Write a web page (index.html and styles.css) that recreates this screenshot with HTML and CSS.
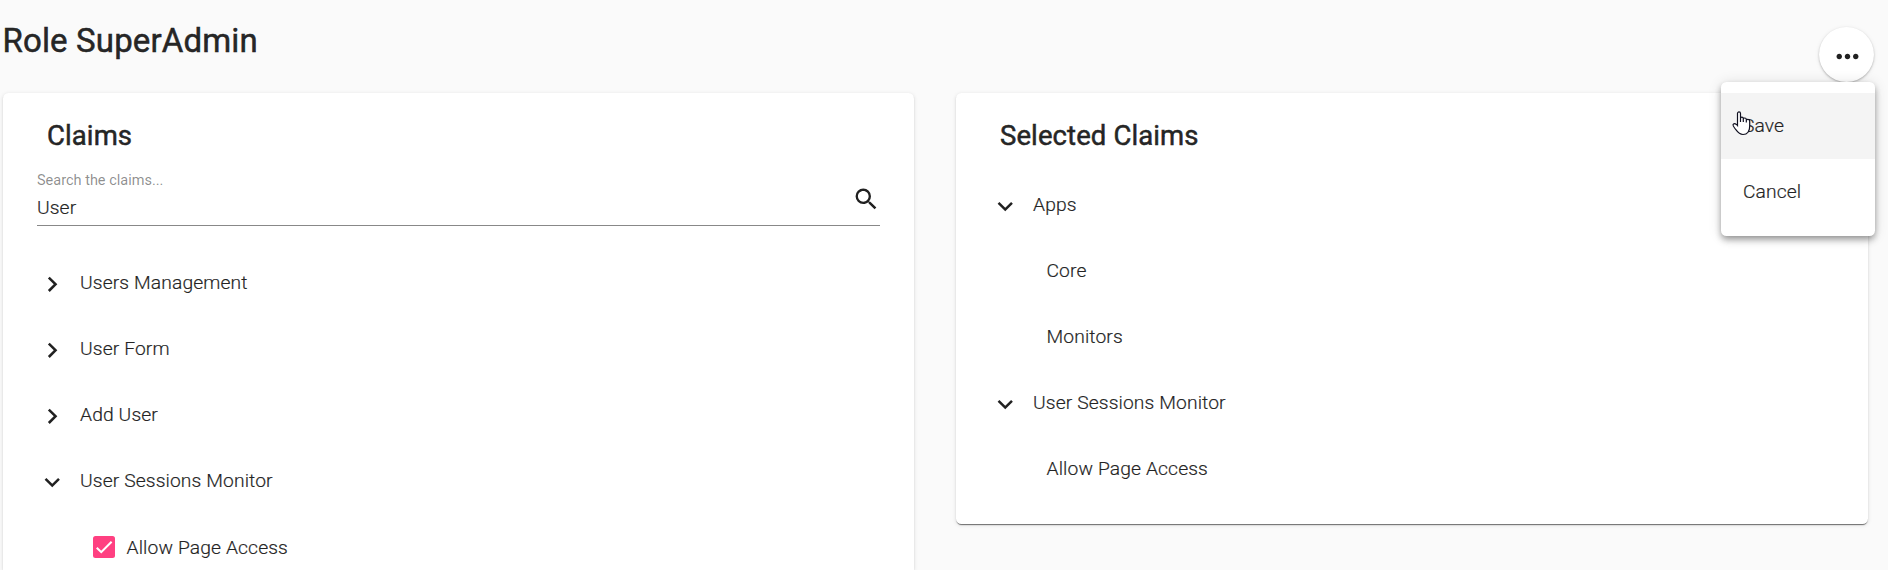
FILE: index.html
```
<!DOCTYPE html>
<html lang="en">
<head>
<meta charset="utf-8">
<title>Role SuperAdmin</title>
<link rel="stylesheet" href="styles.css">
</head>
<body>
<svg class="defs" width="0" height="0" aria-hidden="true">
  <symbol id="chev-right" viewBox="0 0 24 24"><path d="M10 6 8.59 7.41 13.17 12l-4.58 4.59L10 18l6-6z"/></symbol>
  <symbol id="chev-down" viewBox="0 0 24 24"><path d="M7.41 8.59 12 13.17l4.59-4.58L18 10l-6 6-6-6z"/></symbol>
</svg>
<header class="page-header">
  <h1 class="page-title">Role SuperAdmin</h1>
  <div class="actions">
    <button class="fab" aria-label="Actions"><svg class="fab-icon" viewBox="0 0 24 24"><path d="M6 10c-1.1 0-2 .9-2 2s.9 2 2 2 2-.9 2-2-.9-2-2-2zm12 0c-1.1 0-2 .9-2 2s.9 2 2 2 2-.9 2-2-.9-2-2-2zm-6 0c-1.1 0-2 .9-2 2s.9 2 2 2 2-.9 2-2-.9-2-2-2z"/></svg></button>
    <div class="menu" role="menu">
      <div class="menu-item hovered" role="menuitem">Save</div>
      <div class="menu-item" role="menuitem">Cancel</div>
      <svg class="pointer" viewBox="0 0 19 25"><path d="M5.500 14.500V2.600C5.500.4 8.500.4 8.500 2.600V11V7.500C8.500 5.700 11.300 5.700 11.300 7.500V11V8.200C11.300 6.600 14.300 6.600 14.300 8.400V11.500V9.400C14.300 8 17.700 8 17.700 10.200V15C17.700 20 15.500 23.500 11 23.500C6.500 23.500 5 20 2.600 17C1.200 15.200.5 14.200 1.200 13.300C2.500 12 4.300 13 5.500 14.500Z"/></svg>
    </div>
  </div>
</header>
<main class="columns">
  <section class="card claims">
    <h2 class="card-title">Claims</h2>
    <div class="search">
      <div class="search-text">
        <label class="search-label">Search the claims...</label>
        <div class="search-value">User</div>
      </div>
      <svg class="search-icon" viewBox="0 0 24 24"><path d="M15.5 14h-.79l-.28-.27A6.471 6.471 0 0 0 16 9.500 6.500 6.500 0 1 0 9.500 16c1.610 0 3.090-.59 4.230-1.570l.27.28v.79l5 4.990L20.490 19l-4.990-5zm-6 0C7.010 14 5 11.990 5 9.500S7.010 5 9.500 5 14 7.010 14 9.500 11.990 14 9.500 14z"/></svg>
    </div>
    <ul class="tree">
      <li class="node"><svg class="chev"><use href="#chev-right"/></svg>Users Management</li>
      <li class="node"><svg class="chev"><use href="#chev-right"/></svg>User Form</li>
      <li class="node"><svg class="chev"><use href="#chev-right"/></svg>Add User</li>
      <li class="node"><svg class="chev"><use href="#chev-down"/></svg>User Sessions Monitor</li>
      <li class="node check-node"><span class="checkbox"><svg class="check" viewBox="0 0 24 24"><path d="M4.100 12.700 9 17.600 20.300 6.300"/></svg></span>Allow Page Access</li>
    </ul>
  </section>
  <section class="card selected">
    <h2 class="card-title">Selected Claims</h2>
    <ul class="tree">
      <li class="node"><svg class="chev"><use href="#chev-down"/></svg>Apps</li>
      <li class="node leaf">Core</li>
      <li class="node leaf">Monitors</li>
      <li class="node"><svg class="chev"><use href="#chev-down"/></svg>User Sessions Monitor</li>
      <li class="node leaf">Allow Page Access</li>
    </ul>
  </section>
</main>
</body>
</html>
```
FILE: styles.css
```
* { box-sizing: border-box; }
html, body { height: 100%; }
body {
  margin: 0;
  overflow: hidden;
  background: #fafafa;
  color: rgba(0, 0, 0, .87);
  font-family: Roboto, sans-serif;
  font-size: 19.25px;
}
.defs { display: none; }
h1, h2, ul { margin: 0; padding: 0; }
ul { list-style: none; }
svg { fill: currentColor; flex: none; }

.page-header {
  display: flex;
  justify-content: space-between;
  height: 93px;
  padding: 0 14px 0 2.5px;
}
.page-title {
  padding-top: 19px;
  font-size: 33px;
  line-height: 44px;
  font-weight: 400;
  letter-spacing: .14px;
  -webkit-text-stroke: .5px #212121;
}
.actions { position: relative; padding-top: 27px; }
.fab {
  display: flex;
  align-items: center;
  justify-content: center;
  width: 55px;
  height: 55px;
  padding: 3px 0 0 1px;
  border: 0;
  border-radius: 50%;
  background: #fff;
  color: #212121;
  box-shadow: 0 1px 2px rgba(0, 0, 0, .25), 0 1px 5px rgba(0, 0, 0, .08);
}
.fab-icon { width: 33px; height: 33px; }

.menu {
  position: absolute;
  top: 82px;
  right: -1px;
  z-index: 2;
  width: 154px;
  height: 154px;
  padding: 11px 0;
  border-radius: 5.5px;
  background: #fff;
  box-shadow: 0 3px 6px -1px rgba(0, 0, 0, .3), 0 5px 7px rgba(0, 0, 0, .14), 0 1px 14px rgba(0, 0, 0, .12);
}
.menu-item { height: 66px; padding-left: 22px; line-height: 66px; letter-spacing: .1px; }
.menu-item, .node, .search-value { font-weight: 300; -webkit-text-stroke: .22px #212121; }
.hovered { background: #f4f4f4; }
.pointer {
  position: absolute;
  left: 11px;
  top: 29px;
  width: 19px;
  height: 25px;
  fill: #fff;
  stroke: #101020;
  stroke-width: 1.2;
}

.columns { display: flex; gap: 42px; align-items: flex-start; padding-left: 3px; }
.card {
  width: 911px;
  border-radius: 5.5px;
  background: #fff;
  box-shadow: 0 2px 1px -1px rgba(0, 0, 0, .4), 0 1px 1px rgba(0, 0, 0, .2), 0 1px 4px rgba(0, 0, 0, .12);
}
.selected { width: 912px; height: 431px; padding: 0 34px; }
.claims {
  height: 477px;
  padding: 0 34px;
  overflow: hidden;
  border-radius: 5.5px 5.5px 0 0;
}
.card-title {
  padding: 25px 0 0 10px;
  font-size: 27.5px;
  line-height: 36px;
  font-weight: 400;
  letter-spacing: .1px;
  -webkit-text-stroke: .5px #212121;
}

.search {
  display: flex;
  justify-content: space-between;
  width: 843px;
  height: 55px;
  margin-top: 17px;
  border-bottom: 1px solid #888;
}
.search-label { display: block; font-size: 14.5px; line-height: 20px; color: rgba(0, 0, 0, .45); }
.search-value { line-height: 24px; margin-top: 5px; letter-spacing: .1px; }
.search-icon { width: 28.5px; height: 28.5px; margin: 14px 0 0; }

.node { display: flex; align-items: center; height: 66px; letter-spacing: .12px; }
.chev { width: 30.5px; height: 30.5px; margin: 4px 12.5px 0 0; }
.leaf { padding-left: 56.5px; }
.claims .tree { margin-top: 23px; }
.selected .tree { margin-top: 17px; }
.check-node { padding: 2px 0 0 56px; }
.checkbox {
  display: flex;
  width: 22px;
  height: 22px;
  margin-right: 11.5px;
  border-radius: 2.5px;
  background: #ff4081;
}
.check { width: 22px; height: 22px; fill: none; stroke: #fff; stroke-width: 2.3; }
```
